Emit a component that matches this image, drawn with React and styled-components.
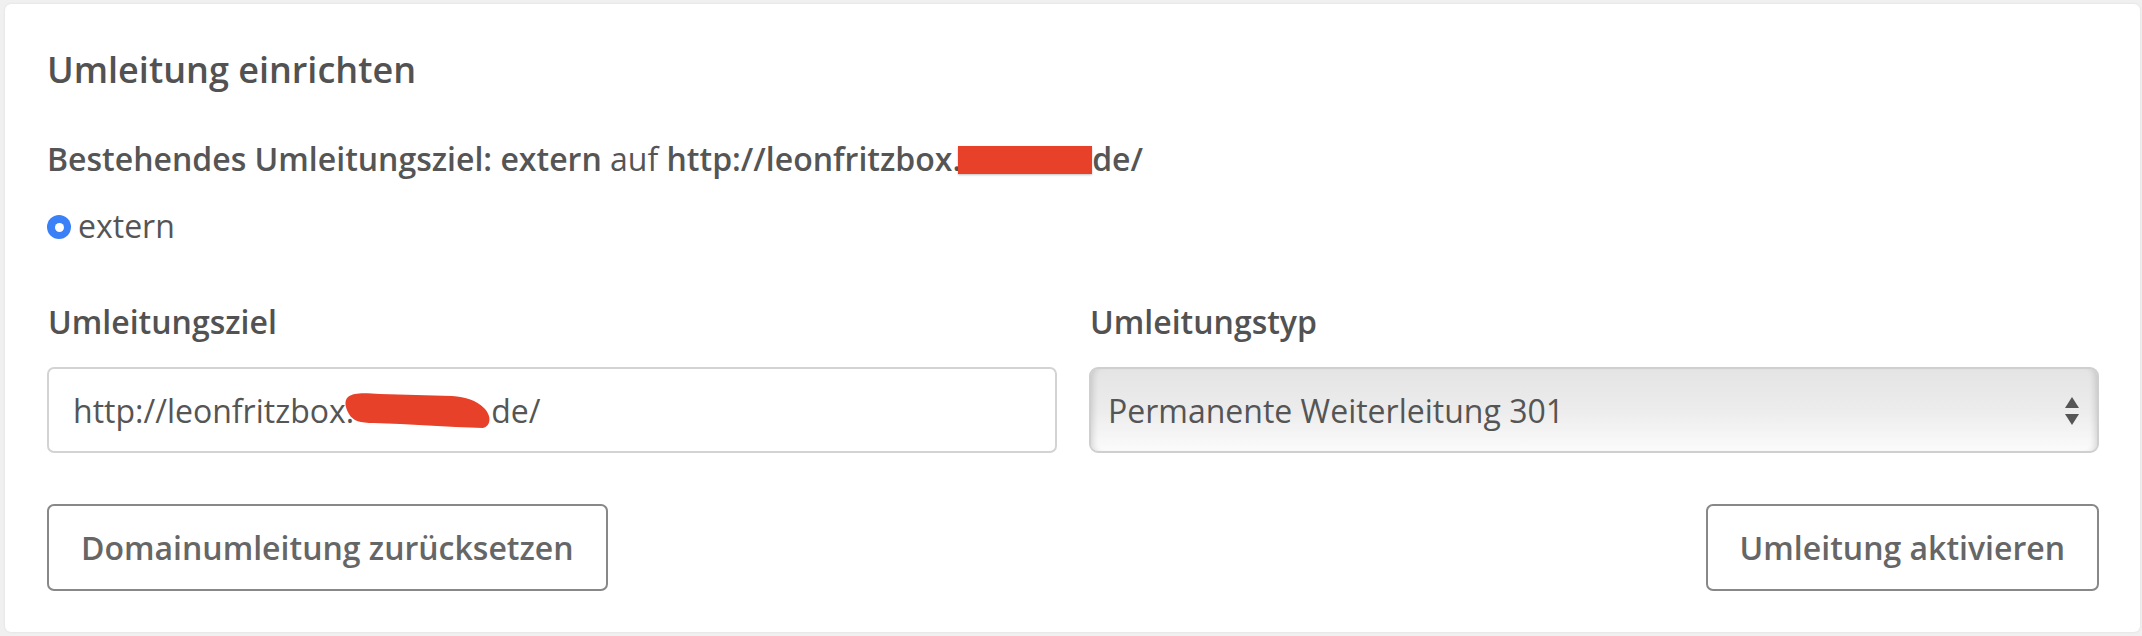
import React from 'react';
import styled, { createGlobalStyle } from 'styled-components';

const GlobalStyle = createGlobalStyle`
  html, body {
    margin: 0;
    padding: 0;
    background: #f0f0f0;
  }
  body {
    font-family: "Open Sans", "Liberation Sans", sans-serif;
    color: #555;
  }
`;

const Page = styled.div`
  padding: 4px 2px 4px 5px;
`;

const Card = styled.div`
  background: #fff;
  border-radius: 6px;
  box-shadow: 0 0 3px rgba(0, 0, 0, 0.08);
  padding: 44px 41px 41px 42px;
`;

const Heading = styled.h2`
  margin: 0;
  font-size: 36px;
  line-height: 44px;
  font-weight: 600;
  color: #525252;
`;

const InfoLine = styled.div`
  margin-top: 47px;
  font-size: 32px;
  line-height: 40px;
  color: #555;
  display: flex;
  align-items: center;
  white-space: pre;
`;

const Strong = styled.span`
  font-weight: 600;
`;

const Redacted = styled.span`
  display: inline-block;
  width: 134px;
  height: 28px;
  background: #e8412a;
  box-shadow: 0 1px 2px rgba(0, 0, 0, 0.25);
  margin: 2px 0 0 -3px;
`;

const RadioRow = styled.label`
  margin-top: 27px;
  display: flex;
  align-items: center;
  gap: 7px;
  font-size: 32px;
  line-height: 40px;
  color: #555;
`;

const RadioDot = styled.span`
  width: 24px;
  height: 24px;
  border-radius: 50%;
  background: #3a80f6;
  display: flex;
  align-items: center;
  justify-content: center;
  margin-top: 2px;

  &::after {
    content: '';
    width: 9px;
    height: 9px;
    border-radius: 50%;
    background: #fff;
  }
`;

const FieldRow = styled.div`
  margin-top: 56px;
  display: grid;
  grid-template-columns: 1fr 1fr;
  column-gap: 32px;
`;

const Field = styled.div`
  display: flex;
  flex-direction: column;
  gap: 25px;
`;

const Label = styled.div`
  font-size: 32px;
  line-height: 40px;
  font-weight: 600;
  color: #525252;
  padding-left: 1px;
`;

const TextInput = styled.div`
  height: 86px;
  box-sizing: border-box;
  border: 2px solid #d3d3d3;
  border-radius: 7px;
  padding: 2px 24px 0;
  display: flex;
  align-items: center;
  font-size: 32px;
  line-height: 40px;
  color: #555;
  white-space: pre;
`;

const Mask = styled.span`
  position: relative;
  display: inline-block;
  width: 137px;
  height: 40px;
`;

const Scribble = styled.svg`
  position: absolute;
  left: -10px;
  top: 0;
  overflow: visible;
`;

const SelectBox = styled.div`
  height: 86px;
  box-sizing: border-box;
  border: 2px solid #cfcfcf;
  border-radius: 9px;
  background: linear-gradient(to bottom, #e4e4e4 0%, #ececec 50%, #fbfbfb 100%);
  box-shadow: inset 7px 0 6px -5px rgba(0, 0, 0, 0.14),
    inset -7px 0 6px -5px rgba(0, 0, 0, 0.14);
  display: flex;
  align-items: center;
  justify-content: space-between;
  padding: 2px 18px 0 17px;
  font-size: 32px;
  line-height: 40px;
  color: #555;
`;

const Arrows = styled.svg`
  display: block;
`;

const ButtonRow = styled.div`
  margin-top: 51px;
  display: flex;
  justify-content: space-between;
`;

const Button = styled.button`
  height: 87px;
  box-sizing: border-box;
  border: 2px solid #888;
  border-radius: 7px;
  background: #fff;
  padding: 0 ${(p) => p.$pad}px;
  font-family: "Open Sans", "Liberation Sans", sans-serif;
  font-size: 32px;
  line-height: 40px;
  font-weight: 600;
  color: #666;
  cursor: pointer;
`;

export default function App() {
  return (
    <Page>
      <GlobalStyle />
      <Card>
        <Heading>Umleitung einrichten</Heading>
        <InfoLine>
          <Strong>Bestehendes Umleitungsziel: extern</Strong>
          {' auf '}
          <Strong>http://leonfritzbox.</Strong>
          <Redacted />
          <Strong>de/</Strong>
        </InfoLine>
        <RadioRow>
          <RadioDot />
          extern
        </RadioRow>
        <FieldRow>
          <Field>
            <Label>Umleitungsziel</Label>
            <TextInput>
              http://leonfritzbox.
              <Mask>
                <Scribble width="150" height="42" viewBox="0 0 150 42">
                  <path
                    d="M4 6 C10 1 22 2 36 3 L108 5 C122 6 132 9 140 17 C148 25 147 35 139 37 C104 36 64 33 30 32 C16 32 9 30 5 23 C1 16 0 10 4 6 Z"
                    fill="#e8412a"
                  />
                </Scribble>
              </Mask>
              de/
            </TextInput>
          </Field>
          <Field>
            <Label>Umleitungstyp</Label>
            <SelectBox>
              Permanente Weiterleitung 301
              <Arrows width="14" height="28" viewBox="0 0 14 28">
                <path d="M7 0 L14 11 L0 11 Z" fill="#555" />
                <path d="M0 17 L14 17 L7 28 Z" fill="#555" />
              </Arrows>
            </SelectBox>
          </Field>
        </FieldRow>
        <ButtonRow>
          <Button $pad={32}>Domainumleitung zurücksetzen</Button>
          <Button $pad={32}>Umleitung aktivieren</Button>
        </ButtonRow>
      </Card>
    </Page>
  );
}
